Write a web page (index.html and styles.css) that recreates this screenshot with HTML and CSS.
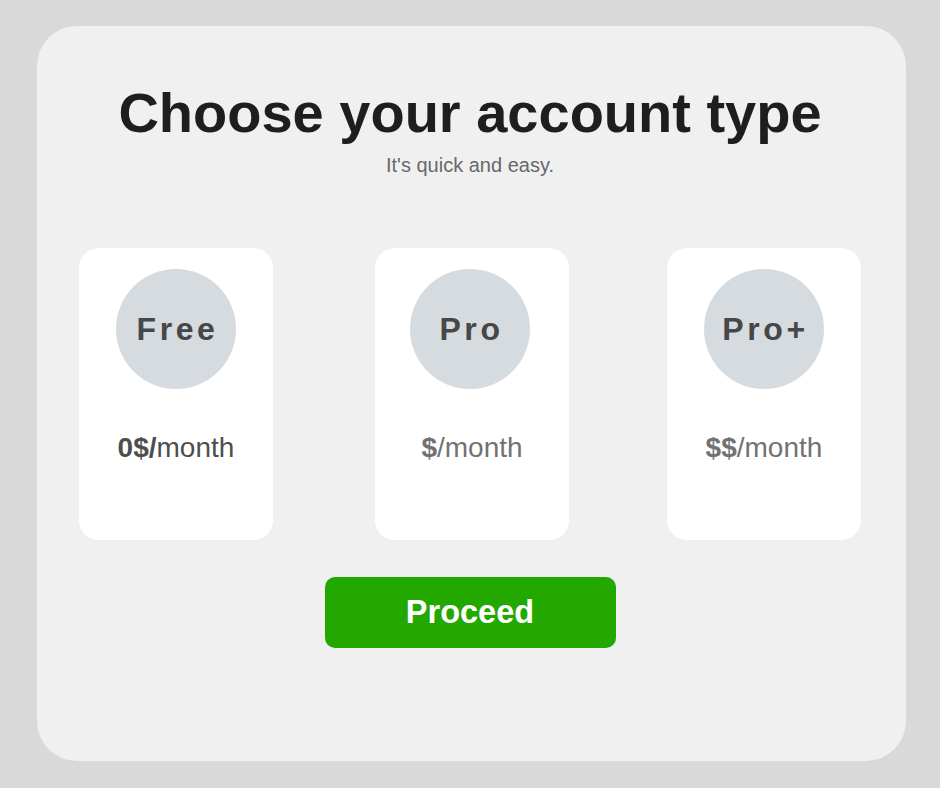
FILE: index.html
```html
<!DOCTYPE html>
<html lang="en">
<head>
<meta charset="utf-8">
<title>Choose your account type</title>
<link rel="stylesheet" href="styles.css">
</head>
<body>
  <main class="panel">
    <h1 class="title">Choose your account type</h1>
    <p class="subtitle">It's quick and easy.</p>
    <div class="plans">
      <div class="plan">
        <div class="badge"><span>Free</span></div>
        <p class="price price-free"><b>0$/</b>month</p>
      </div>
      <div class="plan plan-middle">
        <div class="badge"><span>Pro</span></div>
        <p class="price"><b>$</b>/month</p>
      </div>
      <div class="plan">
        <div class="badge"><span>Pro+</span></div>
        <p class="price"><b>$$</b>/month</p>
      </div>
    </div>
    <div class="actions">
      <button class="proceed" type="button">Proceed</button>
    </div>
  </main>
</body>
</html>
```
FILE: styles.css
```css
html, body {
  margin: 0;
  padding: 0;
}
body {
  background: #d9d9d9;
  font-family: "Liberation Sans", Arial, sans-serif;
  padding: 26px 34px 0 37px;
  height: 788px;
  box-sizing: border-box;
}
.panel {
  width: 869px;
  height: 735px;
  box-sizing: border-box;
  background: #f0f0f0;
  border-radius: 40px;
  padding: 55px 45px 0 42px;
  display: flex;
  flex-direction: column;
  align-items: stretch;
}
.title {
  margin: 0;
  font-size: 56px;
  line-height: 64px;
  font-weight: 700;
  color: #1e1e1e;
  text-align: center;
}
.subtitle {
  margin: 8px 0 0;
  font-size: 20px;
  line-height: 24px;
  color: #66686c;
  text-align: center;
}
.plans {
  margin-top: 71px;
  display: flex;
  justify-content: space-between;
}
.plan {
  width: 194px;
  height: 292px;
  box-sizing: border-box;
  background: #ffffff;
  border-radius: 20px;
  padding-top: 21px;
  display: flex;
  flex-direction: column;
  align-items: center;
}
.plan-middle {
  margin-left: 4px;
}
.plan-middle .badge {
  margin-right: 4px;
}
.badge {
  width: 120px;
  height: 120px;
  border-radius: 50%;
  background: #d6dbe0;
  display: flex;
  align-items: center;
  justify-content: center;
}
.badge span {
  font-size: 32px;
  font-weight: 700;
  letter-spacing: 3.6px;
  padding-left: 3px;
  color: #474747;
  line-height: 1;
}
.price {
  margin: 43px 0 0;
  font-size: 28px;
  line-height: 32px;
  color: #727272;
}
.price-free {
  color: #4e4e4e;
}
.actions {
  margin-top: 37px;
  display: flex;
  justify-content: center;
}
.proceed {
  width: 291px;
  height: 71px;
  border: none;
  border-radius: 10px;
  background: #23a800;
  color: #ffffff;
  font-family: "Liberation Sans", Arial, sans-serif;
  font-size: 32.5px;
  font-weight: 700;
  cursor: pointer;
}
```
